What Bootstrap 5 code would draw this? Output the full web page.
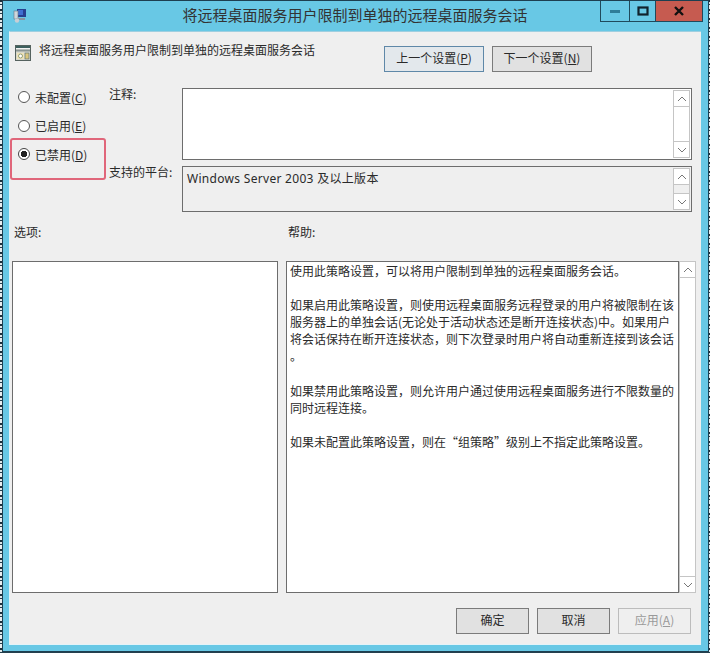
<!DOCTYPE html>
<html lang="zh-CN">
<head>
<meta charset="utf-8">
<title>将远程桌面服务用户限制到单独的远程桌面服务会话</title>
<link rel="stylesheet" href="https://cdn.jsdelivr.net/npm/bootstrap@5.3.0/dist/css/bootstrap.min.css">
<style>
html,body{height:653px;overflow:hidden}
body{background:#e9eef0 repeating-linear-gradient(180deg,#1c2f3a 0 2px,#dfe6e8 2px 4px,#24404e 4px 5px,#e9eef0 5px 9px);font-family:"Liberation Sans","Noto Sans CJK SC",sans-serif;font-size:12px;color:#2a2a2a;line-height:17.1px}
.cjk{font-family:"Noto Sans CJK SC","Liberation Sans",sans-serif}
.win{position:relative;margin-left:2px;width:707px;height:652px;background:#68c8e5;border:1px solid #1d3f50;padding:0 7px 6px 6px;display:flex;flex-direction:column}
.tbar{height:30px;flex:none;display:grid;grid-template-columns:1fr auto 1fr;align-items:start;font-size:15px;color:#333}
.tbar .ttl{padding-top:4px;line-height:20px}
.ticon{margin:7px 0 0 3px;display:block}
.tbtns{justify-self:end;display:flex;height:21px;margin-right:-2px;border:1px solid #1f4a5c;border-top:0}
.tb{width:28px;display:flex;align-items:center;justify-content:center;border-left:1px solid #1f4a5c}
.tb:first-child{border-left:0}
.tb.mx{width:26px}
.tb.cl{width:47px;background:#c65b50}
.client{flex:1;background:#efefef;border-top:1px solid #9fcfe0;border-left:1px solid #e4f3f8;border-bottom:1px solid #e4f3f8;padding:0;min-height:0;display:flex;flex-direction:column}
.head{display:flex;align-items:flex-start;height:56px;padding:14px 0 0 5px}
.head .hicon{flex:none;margin:-1px 8px 0 0}
.head .htxt{width:345px;margin-top:-5px}
.nbtn{--bs-btn-border-radius:0;--bs-btn-padding-y:0;--bs-btn-padding-x:0;--bs-btn-font-size:12px;--bs-btn-color:#2a2a2a;--bs-btn-bg:#e1e1e1;--bs-btn-border-color:#7b7b7b;--bs-btn-hover-bg:#e1e1e1;--bs-btn-hover-border-color:#7b7b7b;--bs-btn-line-height:1;height:26px;width:100px;border-width:1px;padding-bottom:2px}
.nbtn.pri{--bs-btn-border-color:#5f88a8;--bs-btn-bg:#e3e8ec}
.nbtn.off{--bs-btn-bg:#efefef;--bs-btn-color:#9a9a9a;--bs-btn-border-color:#bcbcbc}
.wbtn{width:73px}
.mid{display:flex;height:124px}
.radios{width:99px;flex:none;padding:0 0 0 8px;margin-top:-5px;position:relative}
.rrow{display:flex;align-items:center;height:28.5px;margin:0;gap:5px;padding:0}
.form-check-input.rd{width:12px;height:12px;margin:0;float:none;flex:none;border:1px solid #555;background-color:#fff;border-radius:50%}
.form-check-input.rd:checked{background-color:#fff;border-color:#444;background-image:radial-gradient(circle,#222 0 3px,#fff 3.4px)}
.redbox{position:absolute;left:0;top:55px;width:96px;height:42px;border:2px solid #e0667a;border-radius:3px;pointer-events:none}
.fields{flex:1;display:flex;flex-direction:column;padding-right:9px}
.frow{display:flex}
.frow.f1{height:72px;margin-bottom:6px}
.frow.f2{height:46px}
.flabel{width:73px;flex:none;margin-top:-3px}
.tbox{flex:1;border:1px solid #6d6d6d;background:#fff;position:relative;display:flex;justify-content:space-between;padding:1px 1px 1px 4px}
.tbox.ro{background:#efefef}
.platform{font-family:"Noto Sans","Noto Sans CJK SC",sans-serif;padding-top:2px;letter-spacing:.3px}
.sbar{width:17px;flex:none;border:1px solid #c5c5c5;background:#fff;display:flex;flex-direction:column;justify-content:space-between}
.ro .sbar{background:#efefef}
.sb{height:16px;background:#fff;display:flex;align-items:center;justify-content:center;flex:none}
.sb.up{border-bottom:1px solid #c5c5c5}
.sb.dn{border-top:1px solid #c5c5c5}
.labs{display:flex;height:49px;align-items:flex-start;padding-top:11px}
.optlab{margin-left:4px;width:274px}
.panes{display:flex;height:332px;padding-left:2px}
.optbox{width:266px;background:#fff;border:1px solid #6d6d6d;flex:none;margin-right:8px}
.helpbox{width:393px;flex:none;background:#fff;border:1px solid #6d6d6d;padding:0 0 0 3px;white-space:nowrap}
.helpbox p{margin:0 0 17.1px}
.foot{display:flex;justify-content:flex-end;gap:8px;padding:15px 10px 0 0}
u{text-underline-offset:1px}
</style>
</head>
<body>
<div class="win">
  <div class="tbar">
    <svg class="ticon" width="15" height="15" viewBox="0 0 15 15"><rect x="5" y="1" width="9" height="8" fill="#27408f"/><rect x="6" y="2" width="5" height="5" fill="#3f6fd0"/><rect x="2" y="3" width="4" height="8" fill="#cfd6dc" stroke="#6a7682" stroke-width=".6"/><rect x="4" y="10" width="9" height="2" fill="#8a949e"/><circle cx="5" cy="12.5" r="2.2" fill="#c8ced4"/></svg>
    <div class="ttl cjk text-center">将远程桌面服务用户限制到单独的远程桌面服务会话</div>
    <div class="tbtns">
      <div class="tb"><svg width="12" height="6" viewBox="0 0 12 6"><rect x="1" y="2" width="10" height="3" fill="#2f7d99"/></svg></div>
      <div class="tb mx"><svg width="12" height="10" viewBox="0 0 12 10"><rect x="1.5" y="1.5" width="9" height="7" fill="none" stroke="#10222c" stroke-width="2.2"/></svg></div>
      <div class="tb cl"><svg width="12" height="10" viewBox="0 0 12 10"><path d="M2 1l8 8M10 1l-8 8" stroke="#111" stroke-width="2.4" fill="none"/></svg></div>
    </div>
  </div>
  <div class="client">
    <div class="head">
      <svg class="hicon" width="16" height="16" viewBox="0 0 16 16"><rect x="0.5" y="0.5" width="15" height="15" fill="#d8d8cc" stroke="#55625f"/><rect x="1" y="1" width="14" height="2" fill="#3d5f5d"/><rect x="1" y="3" width="14" height="1.5" fill="#f2f2f2"/><rect x="1" y="4.5" width="14" height="2" fill="#8b9593"/><rect x="2" y="8" width="7" height="6" fill="#efe3b8"/><circle cx="5.5" cy="11" r="2" fill="#fff" stroke="#7a8a60" stroke-width=".8"/><rect x="10" y="8" width="4" height="6" fill="#d9c57e" stroke="#4d6a70" stroke-width=".6"/></svg>
      <div class="htxt cjk">将远程桌面服务用户限制到单独的远程桌面服务会话</div>
      <button class="btn nbtn pri cjk">上一个设置(<u>P</u>)</button>
      <button class="btn nbtn cjk ms-2">下一个设置(<u>N</u>)</button>
    </div>
    <div class="mid">
      <div class="radios cjk">
        <label class="rrow"><input class="form-check-input rd" type="radio" name="st"> <span>未配置(<u>C</u>)</span></label>
        <label class="rrow"><input class="form-check-input rd" type="radio" name="st"> <span>已启用(<u>E</u>)</span></label>
        <label class="rrow"><input class="form-check-input rd" type="radio" name="st" checked> <span>已禁用(<u>D</u>)</span></label>
        <div class="redbox"></div>
      </div>
      <div class="fields">
        <div class="frow f1 cjk">
          <div class="flabel">注释:</div>
          <div class="tbox">
            <span></span>
            <div class="sbar"><div class="sb up"><svg width="10" height="6" viewBox="0 0 10 6"><path d="M1 5l4-4 4 4" fill="none" stroke="#777"/></svg></div><div class="sb dn"><svg width="10" height="6" viewBox="0 0 10 6"><path d="M1 1l4 4 4-4" fill="none" stroke="#777"/></svg></div></div>
          </div>
        </div>
        <div class="frow f2">
          <div class="flabel cjk">支持的平台:</div>
          <div class="tbox ro">
            <span class="platform">Windows Server 2003 及以上版本</span>
            <div class="sbar"><div class="sb up"><svg width="10" height="6" viewBox="0 0 10 6"><path d="M1 5l4-4 4 4" fill="none" stroke="#777"/></svg></div><div class="sb dn"><svg width="10" height="6" viewBox="0 0 10 6"><path d="M1 1l4 4 4-4" fill="none" stroke="#777"/></svg></div></div>
          </div>
        </div>
      </div>
    </div>
    <div class="labs cjk"><div class="optlab">选项:</div><div>帮助:</div></div>
    <div class="panes">
      <div class="optbox"></div>
      <div class="helpbox cjk">
        <p>使用此策略设置，可以将用户限制到单独的远程桌面服务会话。</p>
        <p>如果启用此策略设置，则使用远程桌面服务远程登录的用户将被限制在该<br>服务器上的单独会话(无论处于活动状态还是断开连接状态)中。如果用户<br>将会话保持在断开连接状态，则下次登录时用户将自动重新连接到该会话<br>。</p>
        <p>如果禁用此策略设置，则允许用户通过使用远程桌面服务进行不限数量的<br>同时远程连接。</p>
        <p>如果未配置此策略设置，则在“组策略”级别上不指定此策略设置。</p>
      </div>
      <div class="sbar"><div class="sb up"><svg width="10" height="6" viewBox="0 0 10 6"><path d="M1 5l4-4 4 4" fill="none" stroke="#777"/></svg></div><div class="sb dn"><svg width="10" height="6" viewBox="0 0 10 6"><path d="M1 1l4 4 4-4" fill="none" stroke="#777"/></svg></div></div>
    </div>
    <div class="foot cjk">
      <button class="btn nbtn wbtn">确定</button>
      <button class="btn nbtn wbtn">取消</button>
      <button class="btn nbtn wbtn off">应用(<u>A</u>)</button>
    </div>
  </div>
</div>
<script src="https://cdn.jsdelivr.net/npm/bootstrap@5.3.0/dist/js/bootstrap.bundle.min.js"></script>
</body>
</html>
